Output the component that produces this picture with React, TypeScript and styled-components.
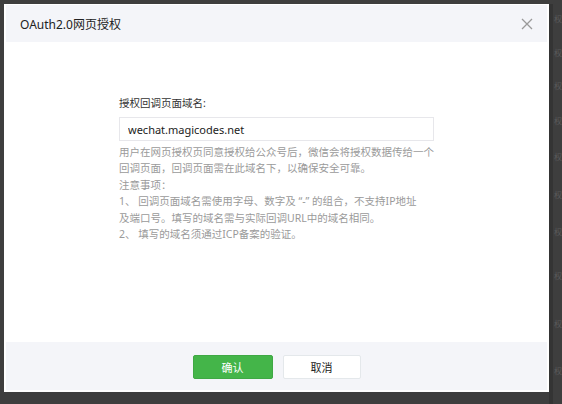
import styled, { createGlobalStyle } from 'styled-components'

const GlobalStyle = createGlobalStyle`
    html, body {
        margin: 0;
        padding: 0;
        background: #3e3e3e;
    }
    body {
        font-family: "Noto Sans", "Noto Sans CJK SC", sans-serif;
    }
`

const Screen = styled.div`
    display: flex;
    width: 562px;
    height: 404px;
    padding: 4px 0 0 4px;
    box-sizing: border-box;
    background: #3e3e3e;
    overflow: hidden;
`

const Dialog = styled.div`
    display: flex;
    flex-direction: column;
    width: 545px;
    height: 388px;
    padding: 1px 2px 2px 2px;
    box-sizing: border-box;
    background: #ffffff;
    flex-shrink: 0;
`

const Header = styled.div`
    display: flex;
    align-items: center;
    justify-content: space-between;
    height: 37px;
    padding: 0 14px;
    background: #f4f5f9;
`

const Title = styled.h3`
    margin: 0;
    font-size: 12px;
    font-weight: normal;
    color: #222;
`

const Close = styled.button`
    display: flex;
    padding: 0;
    border: none;
    background: none;
    cursor: pointer;
`

const Body = styled.div`
    display: flex;
    flex-direction: column;
    align-items: center;
    height: 300px;
    padding-top: 53px;
    box-sizing: border-box;
`

const Field = styled.div`
    display: flex;
    flex-direction: column;
    width: 315px;
`

const Label = styled.label`
    font-size: 10.5px;
    line-height: 16px;
    color: #333;
    margin-bottom: 6px;
`

const Input = styled.input`
    height: 24px;
    padding: 0 8px;
    box-sizing: border-box;
    border: 1px solid #e7e7eb;
    font-family: inherit;
    font-size: 11px;
    color: #222;
    outline: none;
`

const Tips = styled.div`
    margin-top: 3px;
    font-size: 10.5px;
    line-height: 16.4px;
    color: #9a9a9a;
    white-space: nowrap;
`

const TipLine = styled.div``

const Footer = styled.div`
    display: flex;
    justify-content: center;
    align-items: center;
    gap: 10px;
    height: 48px;
    padding-top: 2px;
    box-sizing: border-box;
    background: #f4f5f9;
`

const Button = styled.button<{ $primary?: boolean }>`
    width: ${(p) => (p.$primary ? '80px' : '78px')};
    height: 24px;
    border-radius: 2px;
    border: 1px solid ${(p) => (p.$primary ? '#3fa844' : '#e4e8eb')};
    background: ${(p) => (p.$primary ? '#44b549' : '#ffffff')};
    color: ${(p) => (p.$primary ? '#ffffff' : '#222')};
    font-family: inherit;
    font-size: 11px;
    cursor: pointer;
`

/* the page table showing through at the right of the overlay */
const Backdrop = styled.div`
    display: flex;
    flex-direction: column;
    flex: 1;
    border-left: 4px solid #343434;
    padding-top: 10px;
    overflow: hidden;
`

const BackRow = styled.div<{ $h: number }>`
    height: ${(p) => p.$h}px;
    font-size: 8px;
    line-height: 10px;
    color: #5a5a5a;
    padding-left: 1px;
`

const backRows = [36, 35, 38, 38, 40, 40, 46, 52, 50, 40]

export default function App() {
    return (
        <>
            <GlobalStyle />
            <Screen>
                <Dialog>
                    <Header>
                        <Title>OAuth2.0网页授权</Title>
                        <Close aria-label='关闭'>
                            <svg width='12' height='12' viewBox='0 0 12 12'>
                                <path d='M1 1L11 11M11 1L1 11' stroke='#9a9a9a' strokeWidth='1.3' fill='none' />
                            </svg>
                        </Close>
                    </Header>
                    <Body>
                        <Field>
                            <Label>授权回调页面域名:</Label>
                            <Input defaultValue='wechat.magicodes.net' />
                            <Tips>
                                <TipLine>用户在网页授权页同意授权给公众号后，微信会将授权数据传给一个</TipLine>
                                <TipLine>回调页面，回调页面需在此域名下，以确保安全可靠。</TipLine>
                                <TipLine>注意事项：</TipLine>
                                <TipLine>1、 回调页面域名需使用字母、数字及 “-” 的组合，不支持IP地址</TipLine>
                                <TipLine>及端口号。填写的域名需与实际回调URL中的域名相同。</TipLine>
                                <TipLine>2、 填写的域名须通过ICP备案的验证。</TipLine>
                            </Tips>
                        </Field>
                    </Body>
                    <Footer>
                        <Button $primary>确认</Button>
                        <Button>取消</Button>
                    </Footer>
                </Dialog>
                <Backdrop>
                    {backRows.map((h, i) => (
                        <BackRow key={i} $h={h}>权</BackRow>
                    ))}
                </Backdrop>
            </Screen>
        </>
    )
}
